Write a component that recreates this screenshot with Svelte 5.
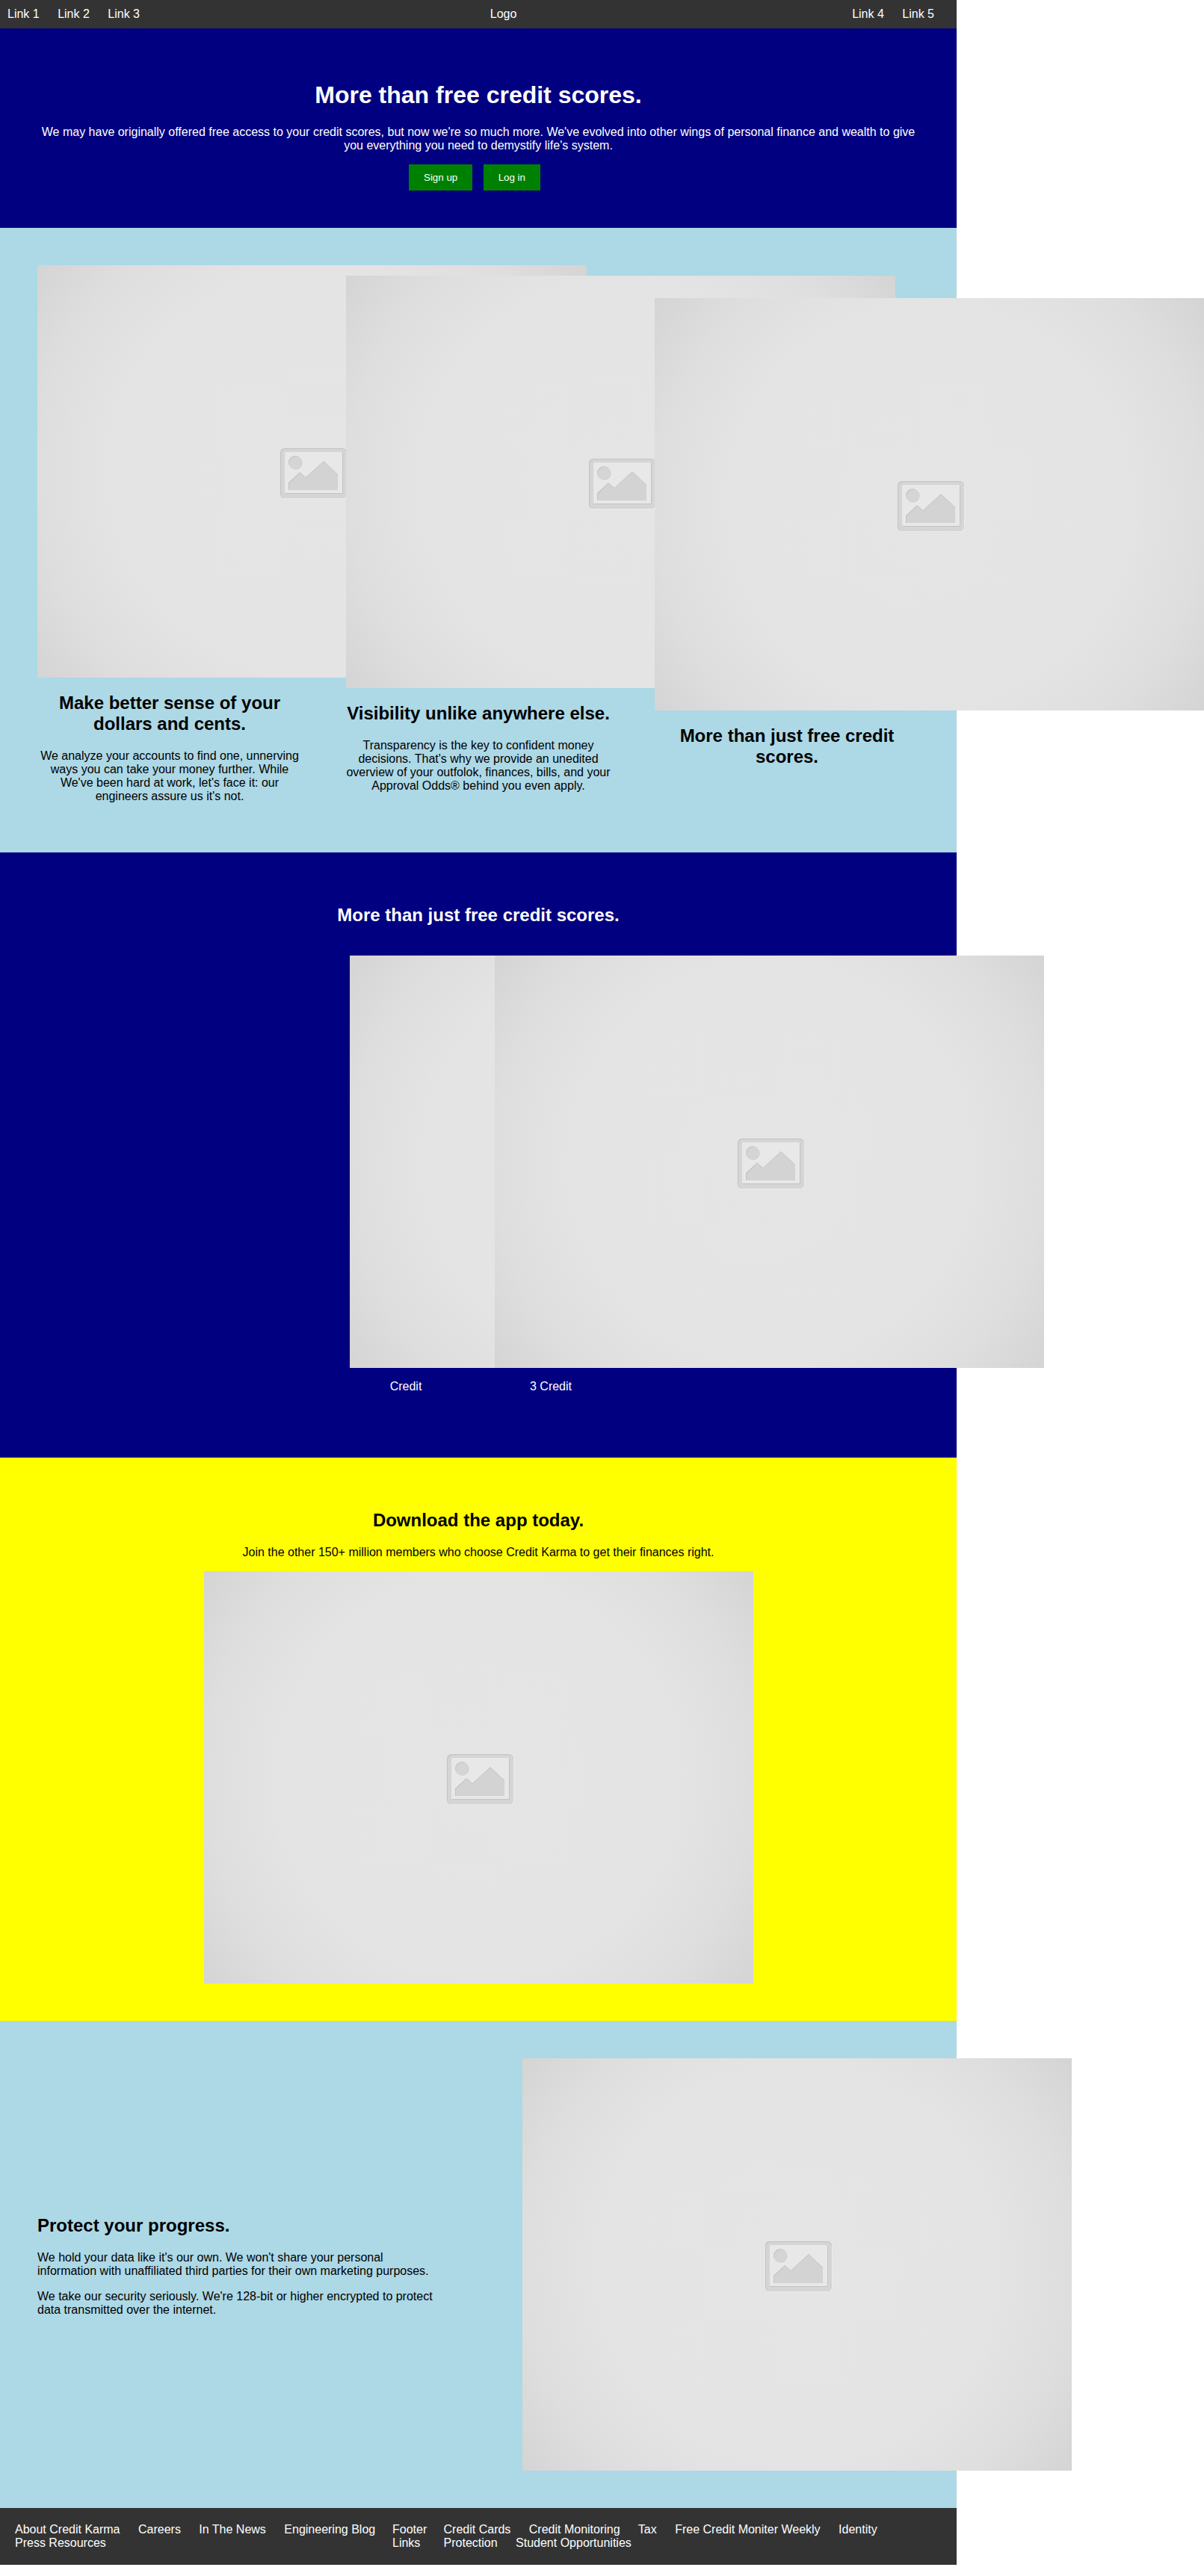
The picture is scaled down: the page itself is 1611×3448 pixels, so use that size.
<script>
  const navLeft = ['Link 1', 'Link 2', 'Link 3'];
  const navRight = ['Link 4', 'Link 5'];
  const company = ['About Credit Karma', 'Careers', 'In The News', 'Engineering Blog', 'Press Resources'];
  const products = [
    'Credit Cards',
    'Credit Monitoring',
    'Tax',
    'Free Credit Moniter Weekly',
    'Identity Protection',
    'Student Opportunities'
  ];
  const features = [
    {
      title: 'Make better sense of your dollars and cents.',
      text: "We analyze your accounts to find one, unnerving ways you can take your money further. While We've been hard at work, let's face it: our engineers assure us it's not."
    },
    {
      title: 'Visibility unlike anywhere else.',
      text: "Transparency is the key to confident money decisions. That's why we provide an unedited overview of your outfolok, finances, bills, and your Approval Odds® behind you even apply."
    },
    { title: 'More than just free credit scores.', text: '' }
  ];
  const credits = ['Credit', '3 Credit'];
</script>

{#snippet links(items)}
  {#each items as item}<a href="#top">{item}</a>{' '}{/each}
{/snippet}

{#snippet placeholder()}
  <svg class="placeholder" viewBox="0 0 735 552" role="img" aria-label="Placeholder">
    <defs>
      <radialGradient id="vignette" gradientUnits="userSpaceOnUse" cx="367" cy="276" r="460">
        <stop offset="0" stop-color="#e5e5e5" />
        <stop offset="0.58" stop-color="#e4e4e4" />
        <stop offset="0.8" stop-color="#dedede" />
        <stop offset="1" stop-color="#d4d4d4" />
      </radialGradient>
    </defs>
    <rect width="735" height="552" fill="url(#vignette)" />
    <rect x="326" y="246" width="89" height="67" rx="6" fill="#ececec" />
    <rect x="325" y="245" width="89" height="67" rx="6" fill="#c2c2c2" />
    <rect x="326" y="246" width="88" height="66" rx="6" fill="#d5d5d5" />
    <rect x="331" y="250" width="78" height="56" rx="2" fill="#c2c2c2" />
    <rect x="331" y="250" width="77" height="55" rx="1" fill="#e8e8e8" />
    <circle cx="347" cy="266" r="9" fill="#ededed" />
    <circle cx="345" cy="264" r="9" fill="#c6c6c6" />
    <circle cx="346" cy="265" r="9" fill="#d5d5d5" />
    <path d="M336 301V291L351 277L359 284L383 262L402 280V301Z" fill="#c3c3c3" />
    <path d="M337 301V292L351 278L359 285L383 263L402 281V301Z" fill="#d3d3d3" />
  </svg>
{/snippet}

<div class="page" id="top">
  <nav class="topbar">
    <div>{@render links(navLeft)}</div>
    <div>Logo</div>
    <div>{@render links(navRight)}</div>
  </nav>

  <header class="section navy">
    <h1>More than free credit scores.</h1>
    <p>
      We may have originally offered free access to your credit scores, but now we're so much more. We've
      evolved into other wings of personal finance and wealth to give you everything you need to demystify
      life's system.
    </p>
    <div class="actions">
      <button type="button">Sign up</button>
      <button type="button">Log in</button>
    </div>
  </header>

  <section class="section sky features">
    {#each features as feature}
      <article>
        {@render placeholder()}
        <h2>{feature.title}</h2>
        {#if feature.text}<p>{feature.text}</p>{/if}
      </article>
    {/each}
  </section>

  <section class="section navy">
    <h2>More than just free credit scores.</h2>
    <div class="credits">
      {#each credits as credit}
        <div class="credit">
          {@render placeholder()}
          <p>{credit}</p>
        </div>
      {/each}
    </div>
  </section>

  <section class="section yellow">
    <h2>Download the app today.</h2>
    <p>Join the other 150+ million members who choose Credit Karma to get their finances right.</p>
    {@render placeholder()}
  </section>

  <section class="section sky protect">
    <div class="half">
      <h2>Protect your progress.</h2>
      <p>
        We hold your data like it's our own. We won't share your personal information with unaffiliated third
        parties for their own marketing purposes.
      </p>
      <p>
        We take our security seriously. We're 128-bit or higher encrypted to protect data transmitted over the
        internet.
      </p>
    </div>
    <div class="half">{@render placeholder()}</div>
  </section>

  <footer>
    <div>{@render links(company)}</div>
    <div>Footer Links</div>
    <div>{@render links(products)}</div>
  </footer>
</div>

<style>
  :global(body) {
    margin: 0;
    background: #fff;
  }
  .page {
    max-width: 1280px;
    font-family: 'Liberation Sans', Arial, sans-serif;
    font-size: 16px;
    line-height: 18px;
    color: #000;
  }
  .topbar,
  footer {
    display: flex;
    justify-content: space-between;
    background: #333;
    color: #fff;
  }
  .topbar {
    padding: 10px;
  }
  footer {
    padding: 20px;
  }
  a {
    margin-right: 20px;
    color: inherit;
    text-decoration: none;
  }
  .section {
    display: flow-root;
    padding: 50px;
    text-align: center;
  }
  .navy {
    background: navy;
    color: #fff;
  }
  .sky {
    background: lightblue;
  }
  .yellow {
    background: yellow;
  }
  h1 {
    margin: 21px 0 22px;
    font-size: 32px;
    line-height: 37px;
  }
  h2 {
    margin: 20px 0;
    font-size: 24px;
    line-height: 28px;
  }
  p {
    margin: 16px 0;
  }
  .actions button {
    margin: 0 10px 0 0;
    padding: 10px 20px;
    border: 0;
    background: green;
    color: #fff;
    font-family: inherit;
    cursor: pointer;
  }
  .placeholder {
    display: block;
    flex: none;
    width: 735px;
    height: auto;
  }
  .features,
  .protect {
    display: flex;
    justify-content: space-between;
    align-items: center;
  }
  article {
    width: 30%;
  }
  .credits {
    display: flex;
    justify-content: center;
    gap: 44px;
    padding: 20px 0;
  }
  .credit {
    width: 150px;
  }
  .yellow .placeholder {
    margin: 0 auto;
  }
  .half {
    width: 45%;
    text-align: left;
  }
</style>
